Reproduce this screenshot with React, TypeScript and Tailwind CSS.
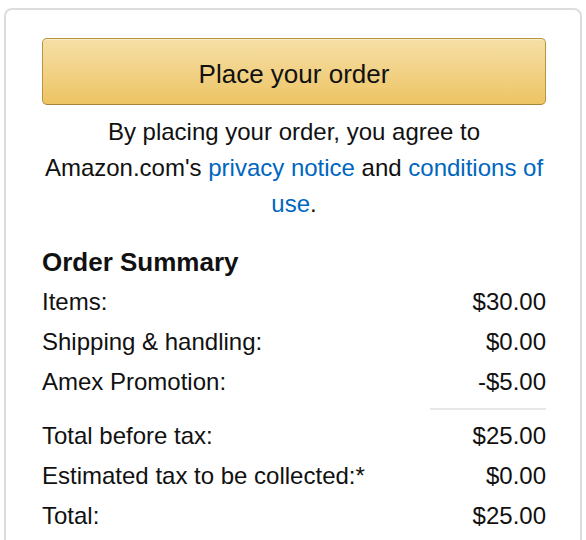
const rows = [
  { label: "Items:", value: "$30.00" },
  { label: "Shipping & handling:", value: "$0.00" },
  { label: "Amex Promotion:", value: "-$5.00" },
];

const totals = [
  { label: "Total before tax:", value: "$25.00" },
  { label: "Estimated tax to be collected:*", value: "$0.00" },
  { label: "Total:", value: "$25.00" },
];

function Row({ label, value }: { label: string; value: string }) {
  return (
    <div className="flex justify-between text-[24px] leading-[40px] text-[#111]">
      <span>{label}</span>
      <span>{value}</span>
    </div>
  );
}

export default function App() {
  return (
    <div
      className="h-[540px] overflow-hidden bg-white px-[4px] pt-[8px]"
      style={{ fontFamily: '"Liberation Sans", Arial, sans-serif' }}
    >
      <div className="rounded-[8px] border-2 border-[#dddddd] pl-[36px] pr-[34px] pt-[28px] pb-[24px]">
        <button className="flex h-[67px] w-full items-center justify-center rounded-[5px] border border-[#b8953f] border-b-[#a5843a] bg-gradient-to-b from-[#f6dfa6] to-[#edc462] pt-[6px] text-[26px] text-[#111] shadow-[inset_0_1px_0_rgba(255,255,255,0.4)]">
          Place your order
        </button>

        <p className="mt-[9px] text-center text-[24px] leading-[36px] text-[#111]">
          By placing your order, you agree to Amazon.com's{" "}
          <a className="text-[#0066c0]">privacy notice</a> and{" "}
          <a className="text-[#0066c0]">conditions of use</a>.
        </p>

        <h3 className="mt-[20px] text-[26px] font-bold leading-[40px] text-[#111]">Order Summary</h3>

        {rows.map((r) => (
          <Row key={r.label} {...r} />
        ))}

        <div className="my-[6px] ml-auto h-[2px] w-[116px] bg-[#e7e7e7]" />

        {totals.map((r) => (
          <Row key={r.label} {...r} />
        ))}
      </div>
    </div>
  );
}
